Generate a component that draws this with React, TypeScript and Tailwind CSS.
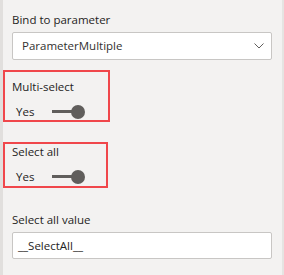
import React from "react";

function Toggle() {
  return (
    <div className="flex items-center h-[16px]">
      <span className="w-[40px] pl-[4px] text-[11.5px] leading-[16px] text-[#252423]">Yes</span>
      <div className="relative w-[34px] h-[16px]">
        <div className="absolute left-0 top-[6px] w-[26px] h-[3px] bg-[#605e5c]" />
        <div className="absolute left-[19px] top-[1px] w-[14px] h-[14px] rounded-full bg-[#605e5c]" />
      </div>
    </div>
  );
}

export default function App() {
  return (
    <div
      className="relative w-[284px] h-[275px] bg-[#f3f2f1] border-l-[3px] border-l-[#e1dfdd] border-r-[2px] border-r-[#e6e4e2] overflow-hidden"
      style={{ fontFamily: '"Segoe UI", "Open Sans", "Noto Sans", sans-serif' }}
    >
      <div className="pl-[9px] pr-[9px] pt-[12px] flex flex-col">
        <div className="text-[11.5px] leading-[16px] text-[#252423]">Bind to parameter</div>
        <div className="mt-[4px] h-[28px] w-[260px] bg-white border border-[#c8c6c4] rounded-[2px] flex items-center justify-between pl-[9px] pr-[6px]">
          <span className="text-[11.5px] text-[#323130]">ParameterMultiple</span>
          <svg width="10" height="6" viewBox="0 0 10 6" className="mr-[1px]">
            <path d="M0.5 0.5 L5 5 L9.5 0.5" fill="none" stroke="#605e5c" strokeWidth="1" />
          </svg>
        </div>
        <div className="mt-[19px] text-[11.5px] leading-[16px] text-[#252423]">Multi-select</div>
        <div className="mt-[9px]"><Toggle /></div>
        <div className="mt-[24px] text-[11.5px] leading-[16px] text-[#252423]">Select all</div>
        <div className="mt-[9px]"><Toggle /></div>
        <div className="mt-[27px] text-[11.5px] leading-[16px] text-[#252423]">Select all value</div>
        <div className="mt-[4px] h-[27px] w-[260px] bg-white border border-[#c8c6c4] rounded-[2px] flex items-center pl-[5px]">
          <span className="text-[11.5px] text-[#252423]">__SelectAll__</span>
        </div>
      </div>
      <div className="absolute left-0 top-[70px] w-[107px] h-[52px] border-2 border-[#f0474b]" />
      <div className="absolute left-0 top-[142px] w-[105px] h-[46px] border-2 border-[#f0474b]" />
    </div>
  );
}
